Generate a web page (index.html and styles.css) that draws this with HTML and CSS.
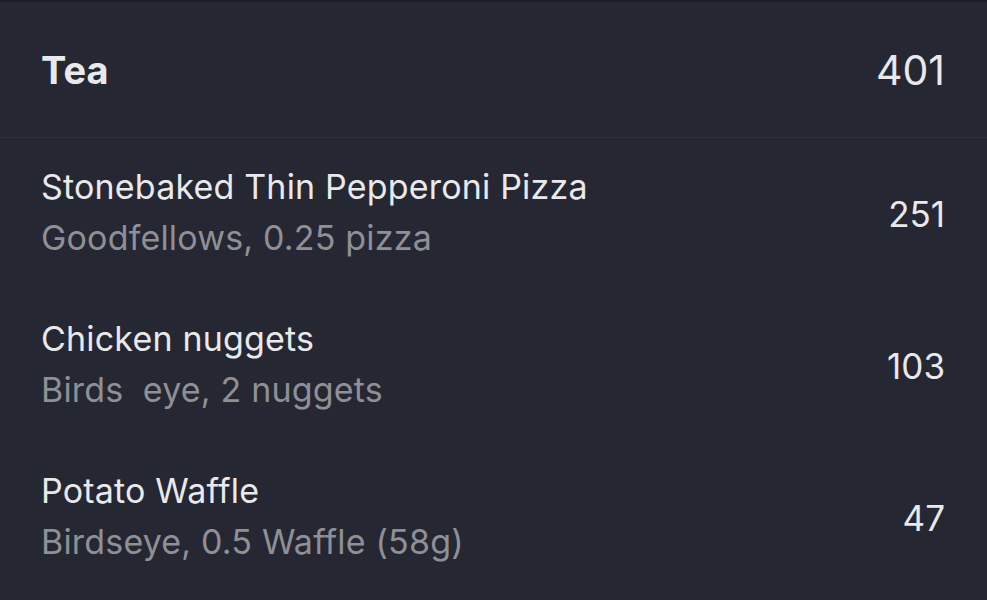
FILE: index.html
```html
<!DOCTYPE html>
<html lang="en">
<head>
  <meta charset="UTF-8" />
  <meta name="viewport" content="width=device-width, initial-scale=1.0"/>
  <title>Tea</title>
  <link rel="stylesheet" href="styles.css">
</head>
<body>

  <div class="meal">
    <div class="meal-head">
      <h2>Tea</h2>
      <span class="total">401</span>
    </div>

    <div class="entry">
      <div class="info">
        <div class="name">Stonebaked Thin Pepperoni Pizza</div>
        <div class="detail">Goodfellows, 0.25 pizza</div>
      </div>
      <span class="kcal">251</span>
    </div>

    <div class="entry">
      <div class="info">
        <div class="name">Chicken nuggets</div>
        <div class="detail">Birds&nbsp; eye, 2 nuggets</div>
      </div>
      <span class="kcal">103</span>
    </div>

    <div class="entry">
      <div class="info">
        <div class="name">Potato Waffle</div>
        <div class="detail">Birdseye, 0.5 Waffle (58g)</div>
      </div>
      <span class="kcal">47</span>
    </div>
  </div>

</body>
</html>
```

FILE: styles.css
```css
* { box-sizing: border-box; }
body {
  margin: 0;
  padding: 0;
  background: #252732;
  font-family: Inter, 'Noto Sans', sans-serif;
  color: #e9e9ec;
  height: 600px;
  overflow: hidden;
}
.meal {
  border-top: 2px solid #1b1d25;
}
.meal-head {
  display: flex;
  justify-content: space-between;
  align-items: center;
  height: 136px;
  padding: 0 42px 0 41px;
  border-bottom: 1px solid #30323d;
}
.meal-head h2 {
  margin: 0;
  font-size: 38px;
  font-weight: 700;
}
.total {
  font-size: 41px;
}
.entry {
  display: flex;
  justify-content: space-between;
  align-items: center;
  height: 152px;
  padding: 0 42px 4px 41px;
}
.info {
  letter-spacing: 0.18px;
}
.name {
  font-size: 34px;
  line-height: 51px;
}
.detail {
  font-size: 34px;
  line-height: 51px;
  color: #8f9096;
}
.kcal {
  font-size: 35px;
  margin-top: 4px;
}
```
